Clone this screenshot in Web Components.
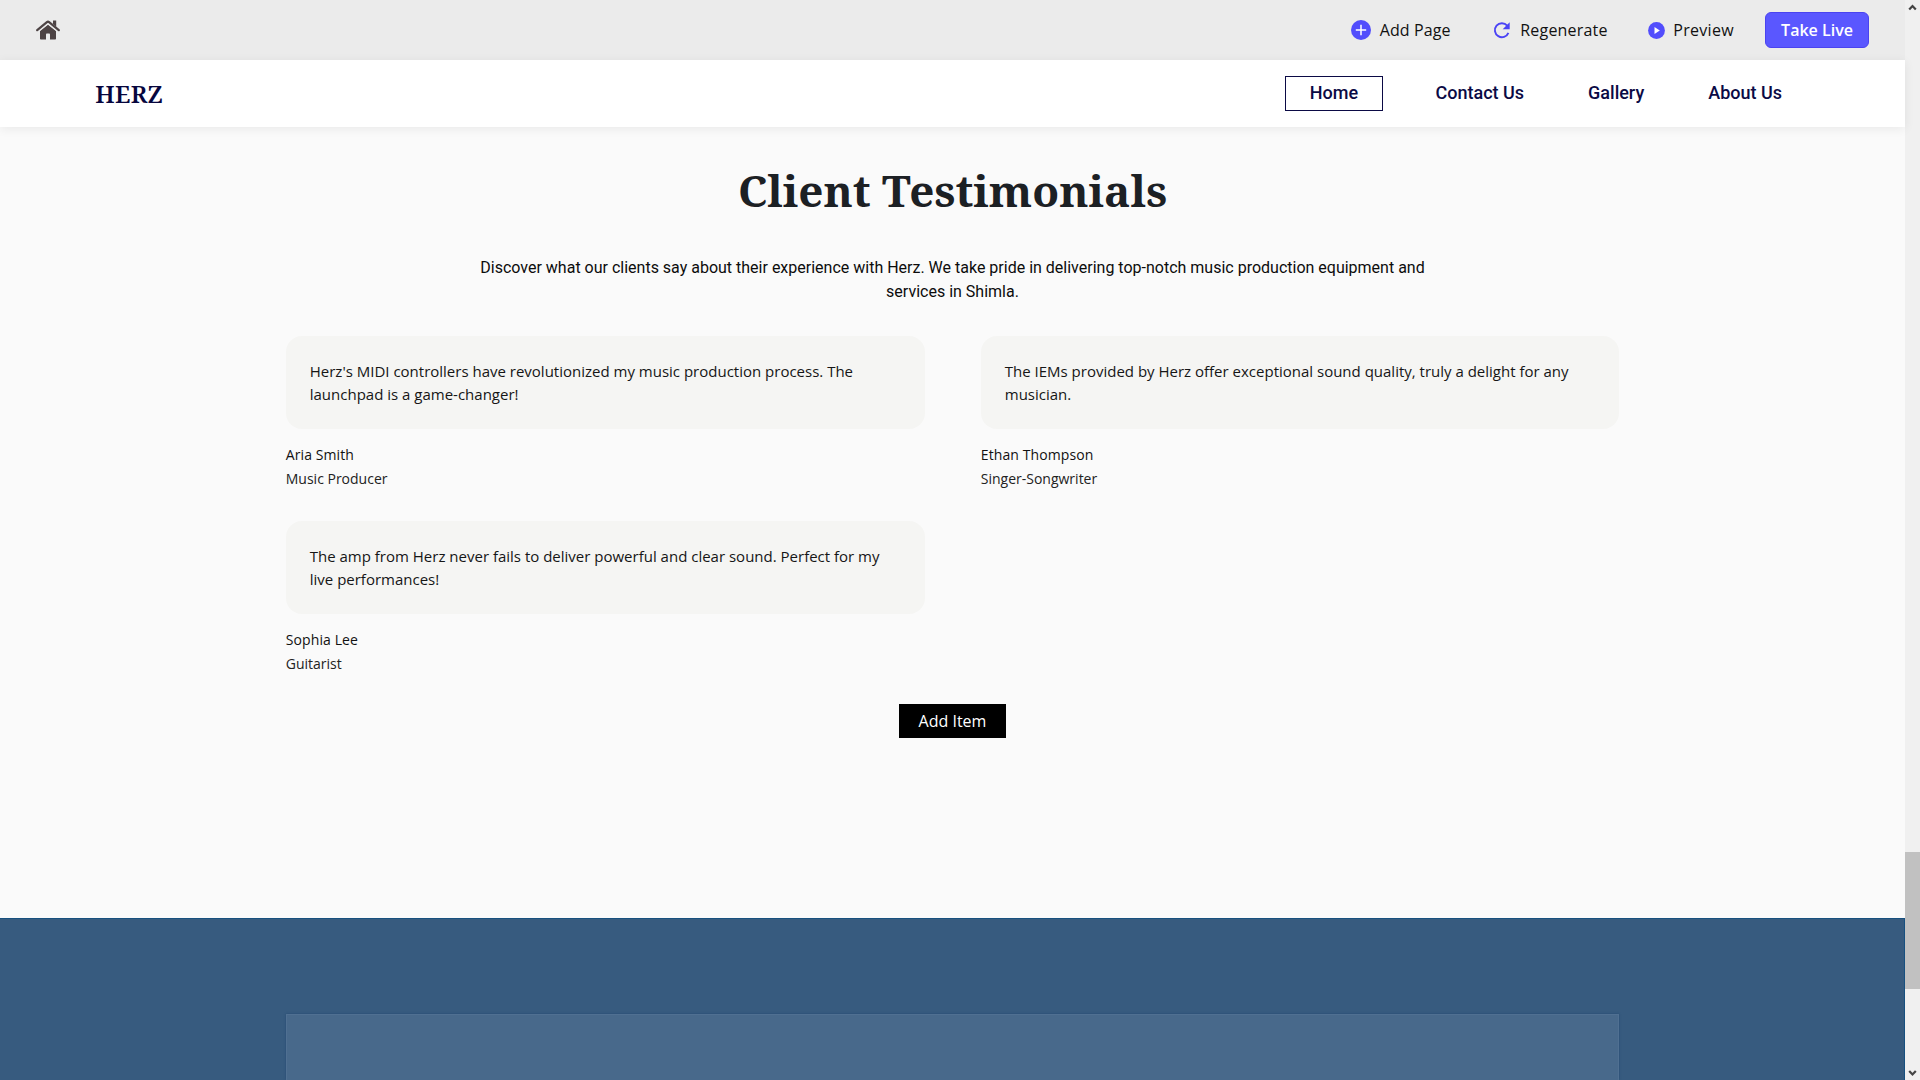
<!DOCTYPE html>
<html lang="en"><head><meta charset="utf-8"><title>Herz</title>
<style>
html,body{margin:0;height:100%;overflow:hidden}
body{font-family:"Open Sans",sans-serif}
</style></head><body>
<herz-app></herz-app>
<script>
const define=(name,html)=>customElements.define(name,class extends HTMLElement{
  constructor(){super();this.attachShadow({mode:'open'}).innerHTML=html;}
});

define('tool-link',`<style>
:host{display:flex;align-items:center;height:60px;font-size:16px;line-height:22px;color:#111;white-space:nowrap}
::slotted(svg){display:block;flex:none;margin-right:var(--gap,9px)}
</style><slot name="icon"></slot><span><slot></slot></span>`);

define('editor-toolbar',`<style>
:host{display:flex;align-items:center;height:60px;background:#ebebeb;box-sizing:border-box;padding:0 36px}
.home{display:block;margin-right:auto}
.a{margin-right:42.700px;--gap:8.400px;letter-spacing:.1px}.b{margin-right:40.300px;--gap:10px;letter-spacing:.2px}.c{margin-right:31px;--gap:8.200px;letter-spacing:.32px}
button{width:104px;height:36px;box-sizing:border-box;border:1px solid #4a43f0;border-radius:6px;background:#5a57ff;color:#fff;font:600 16px/22px "Open Sans",sans-serif;padding:0;margin:0}
</style>
<svg class="home" width="24" height="20" viewBox="0 0 24 20"><path d="M4 10.900 12 4.700l8 6.200V18.800q0 .8-.8.800H14v-5.200q0-.8-.8-.8h-2.400q-.8 0-.8.800v5.200H4.800q-.8 0-.8-.8z" fill="#4d4344"/><path d="M1.200 10.200 10.900 2.200q1.100-.9 2.200 0l9.700 8" fill="none" stroke="#ebebeb" stroke-width="4.600"/><path d="M17 .6h3.200v6.200L17 4z" fill="#4d4344"/><path d="M1.200 10.200 10.900 2.200q1.100-.9 2.200 0l9.700 8" fill="none" stroke="#4d4344" stroke-width="2.200" stroke-linecap="round"/></svg>
<tool-link class="a"><svg slot="icon" width="20" height="20" viewBox="0 0 20 20"><circle cx="10" cy="10" r="10" fill="#524dfc"/><path d="M10 4.800v10.400M4.800 10h10.400" stroke="#fff" stroke-width="1.500"/></svg>Add Page</tool-link>
<tool-link class="b"><svg slot="icon" width="17" height="17" viewBox="0 0 17 17"><path d="M14.200 3.600A7 7 0 1 0 15.400 10.800" fill="none" stroke="#4a43f5" stroke-width="1.900"/><path d="M16.700.3v7H9.700z" fill="#4a43f5"/></svg>Regenerate</tool-link>
<tool-link class="c"><svg slot="icon" width="17" height="17" viewBox="0 0 17 17"><circle cx="8.500" cy="8.500" r="8.400" fill="#524dfc"/><path d="M6.500 5v7l5.300-3.500z" fill="#fff"/></svg>Preview</tool-link>
<button>Take Live</button>`);

define('nav-link',`<style>
:host{display:block;font:500 18px/22px Roboto,sans-serif;color:#0b0a45;white-space:nowrap;padding-bottom:2px}
:host([active]){box-sizing:border-box;width:98px;height:35px;border:1px solid #0b0a45;text-align:center;line-height:32px;padding:0}
</style><slot></slot>`);

define('site-header',`<style>
:host{display:flex;align-items:center;height:67px;background:#fff;box-shadow:0 2px 10px rgba(0,0,0,.07);position:relative;box-sizing:border-box;padding:0 123px 0 95.300px}
.logo{margin-right:auto;font:600 24px/32px "Noto Serif","Droid Serif",serif;letter-spacing:.3px;color:#07063e}
.h{margin-right:52.500px}.ct,.g{margin-right:64px}
</style><span class="logo">HERZ</span>
<nav-link active class="h">Home</nav-link><nav-link class="ct">Contact Us</nav-link><nav-link class="g">Gallery</nav-link><nav-link>About Us</nav-link>`);

define('testimonial-card',`<style>
:host{display:block}
.q{box-sizing:border-box;height:93px;padding:24px 24px 0;border-radius:16px;background:#f5f5f3;font-size:15px;line-height:23.400px;color:#161616}
.n,.r{font-size:14px;line-height:24px;color:#111}
.n{margin-top:14px;letter-spacing:.1px}.r{color:#222}
</style><div class="q"><slot></slot></div><div class="n"><slot name="name"></slot></div><div class="r"><slot name="role"></slot></div>`);

define('client-testimonials',`<style>
:host{display:flex;flex-direction:column;align-items:center;height:791px;background:#fafafa;box-sizing:border-box;padding-top:32px}
h2{margin:0;font:700 44px/62px "Noto Serif","Droid Serif",serif;color:#1c2024;white-space:nowrap}
p{margin:35px 0 0;width:960px;text-align:center;font:400 16px/24px Roboto,sans-serif;color:#0c0c0c}
.grid{margin-top:32px;width:1333.500px;display:grid;grid-template-columns:639px 638.500px;column-gap:56px;grid-auto-rows:185px}
button{margin-top:-2px;width:107px;height:34px;border:0;padding:0;background:#000;color:#fff;font:400 16px/22px "Open Sans",sans-serif}
</style><h2>Client Testimonials</h2>
<p>Discover what our clients say about their experience with Herz. We take pride in delivering top-notch music production equipment and<br>services in Shimla.</p>
<div class="grid">
<testimonial-card>Herz's MIDI controllers have revolutionized my music production process. The<br>launchpad is a game-changer!<span slot="name">Aria Smith</span><span slot="role">Music Producer</span></testimonial-card>
<testimonial-card>The IEMs provided by Herz offer exceptional sound quality, truly a delight for any<br>musician.<span slot="name">Ethan Thompson</span><span slot="role">Singer-Songwriter</span></testimonial-card>
<testimonial-card>The amp from Herz never fails to deliver powerful and clear sound. Perfect for my<br>live performances!<span slot="name">Sophia Lee</span><span slot="role">Guitarist</span></testimonial-card>
</div><button>Add Item</button>`);

define('next-section',`<style>
:host{display:flex;justify-content:center;align-items:flex-end;height:162px;box-sizing:border-box;background:#375b7f;border-top:1px solid #17507f;border-right:1px solid #17507f}
div{width:1333px;height:66px;box-sizing:border-box;background:#48698b;border:1px solid #507092;border-bottom:0;box-shadow:0 0 2px #254a70}
</style><div></div>`);

define('scroll-bar',`<style>
:host{display:flex;flex-direction:column;align-items:center;width:15px;height:1080px;background:#f0f0f0}
svg{display:block;width:15px;height:15px;flex:none}.t{width:15px;height:137px;margin-top:837px;margin-bottom:auto;background:#c1c1c1}
</style><svg viewBox="0 0 15 15"><path d="M4.200 9.500 7.500 6l3.300 3.500" fill="none" stroke="#444" stroke-width="2.200"/></svg><div class="t"></div><svg viewBox="0 0 15 15"><path d="M4.200 6 7.500 9.500 10.800 6" fill="none" stroke="#444" stroke-width="2.200"/></svg>`);

define('herz-app',`<style>
:host{display:flex;width:1920px;height:1080px;overflow:hidden}
main{width:1905px;flex:none}
</style><main><editor-toolbar></editor-toolbar><site-header></site-header><client-testimonials></client-testimonials><next-section></next-section></main><scroll-bar></scroll-bar>`);
</script></body></html>
